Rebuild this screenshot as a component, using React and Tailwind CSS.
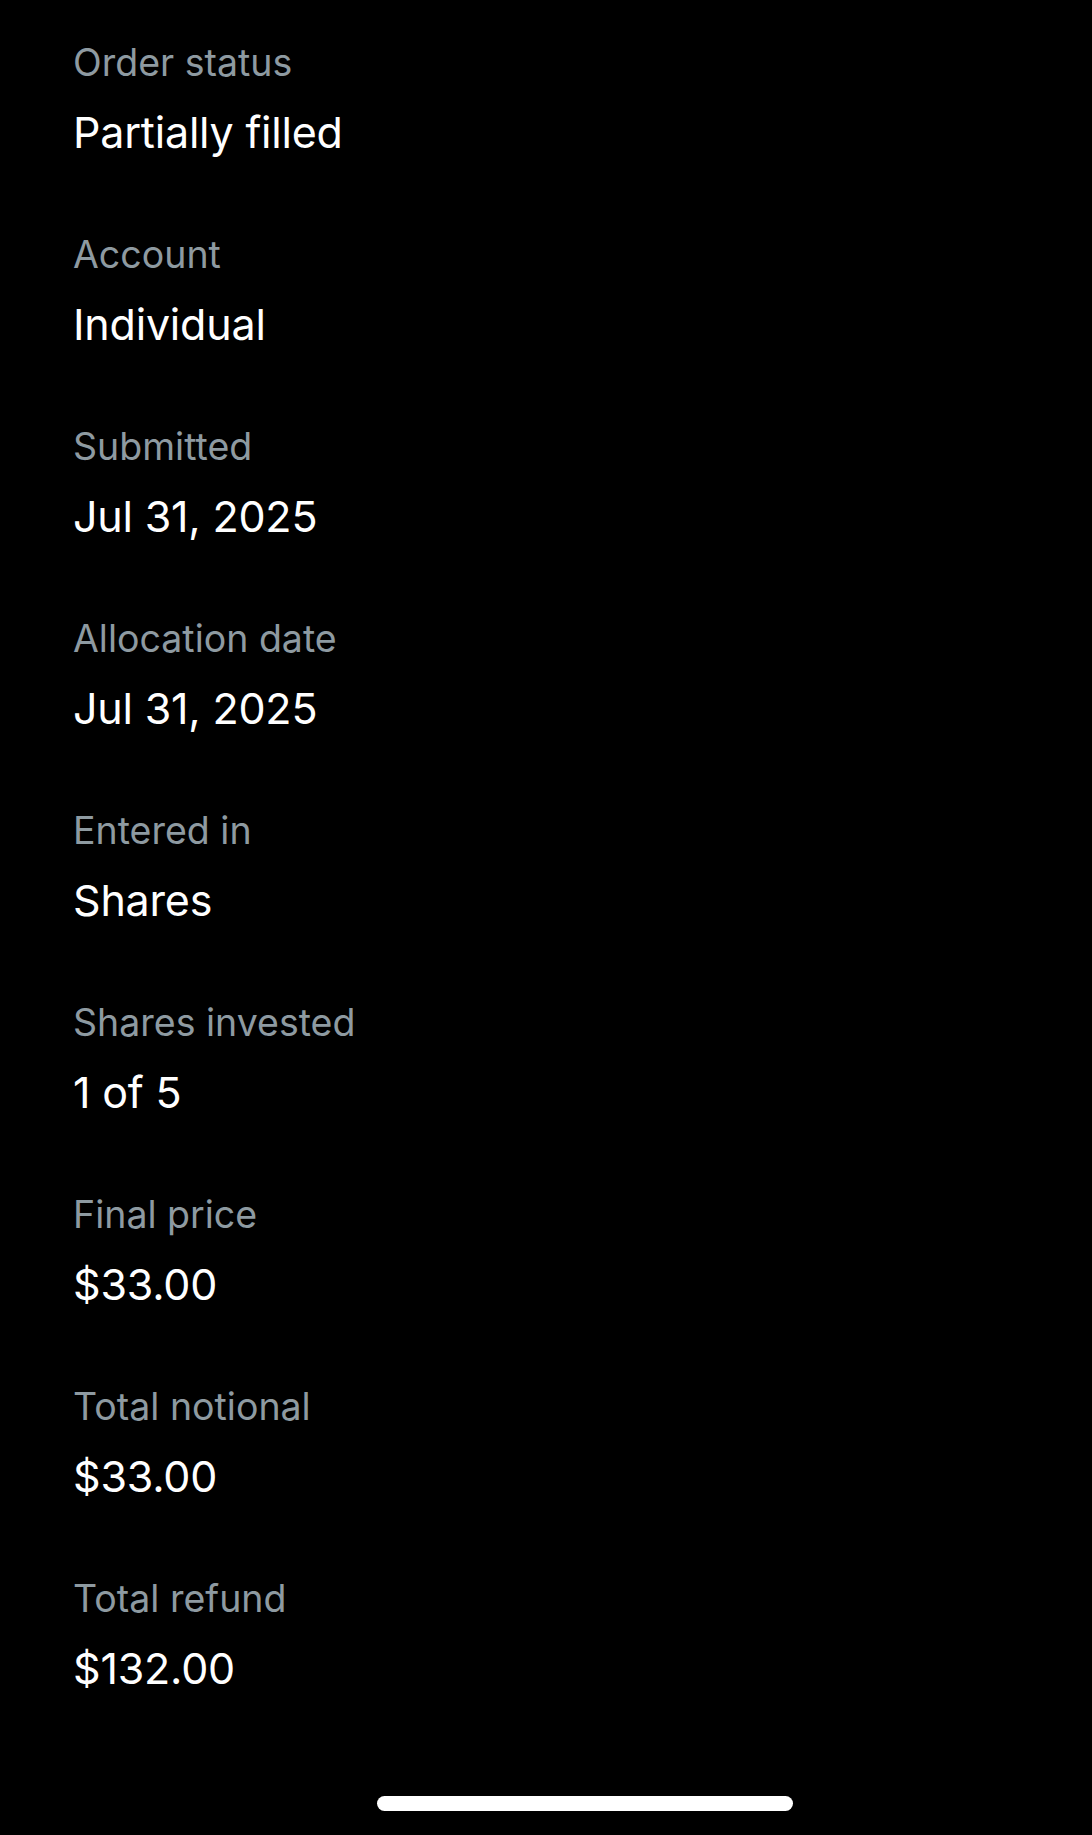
const rows = [
  ["Order status", "Partially filled"],
  ["Account", "Individual"],
  ["Submitted", "Jul 31, 2025"],
  ["Allocation date", "Jul 31, 2025"],
  ["Entered in", "Shares"],
  ["Shares invested", "1 of 5"],
  ["Final price", "$33.00"],
  ["Total notional", "$33.00"],
  ["Total refund", "$132.00"],
];

const DetailRow = ({ label, value }) => (
  <div className="flex flex-col h-[192px]">
    <span className="text-[37.5px] leading-[44px] text-[#8e9aa1]">{label}</span>
    <span className="mt-[21px] text-[43px] leading-[52px] font-[380] tracking-[-0.2px] text-white">{value}</span>
  </div>
);

export default function App() {
  return (
    <div
      className="flex flex-col h-[1835px] w-full bg-black"
      style={{ fontFamily: "Inter, 'Noto Sans', sans-serif" }}
    >
      <div className="flex flex-col pt-[41px] pl-[73px]">
        {rows.map(([label, value]) => (
          <DetailRow key={label} label={label} value={value} />
        ))}
      </div>
      <div className="mt-auto mb-[24px] flex justify-center">
        <div className="ml-[78px] h-[15px] w-[416px] rounded-full bg-white" />
      </div>
    </div>
  );
}
